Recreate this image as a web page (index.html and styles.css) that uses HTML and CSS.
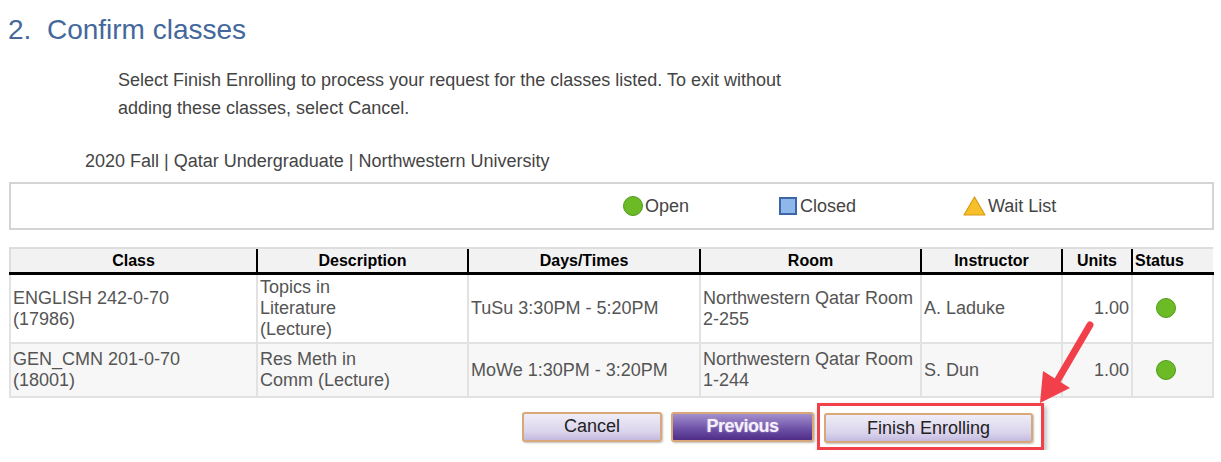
FILE: index.html
```html
<!DOCTYPE html>
<html lang="en">
<head>
    <meta charset="UTF-8">
    <title>Confirm classes</title>
    <link rel="stylesheet" href="styles.css">
</head>
<body>

<h1 class="step-title">2.&nbsp; Confirm classes</h1>

<p class="intro">Select Finish Enrolling to process your request for the classes listed. To exit without adding these classes, select Cancel.</p>

<div class="term">2020 Fall | Qatar Undergraduate | Northwestern University</div>

<!-- Legend -->
<div class="legend">
    <span class="legend-item legend-open"><span class="dot"></span>Open</span>
    <span class="legend-item legend-closed"><span class="square"></span>Closed</span>
    <span class="legend-item legend-wait">
        <svg class="tri" width="23" height="20" viewBox="0 0 23 20"><path d="M11.5 1 L22 19 L1 19 Z" fill="#f7c02a" stroke="#d99a12" stroke-width="1.2" stroke-linejoin="round"/></svg>Wait List
    </span>
</div>

<!-- Class list -->
<table class="classes">
    <thead>
        <tr>
            <th class="c-class">Class</th>
            <th class="c-desc">Description</th>
            <th class="c-days">Days/Times</th>
            <th class="c-room">Room</th>
            <th class="c-instr">Instructor</th>
            <th class="c-units">Units</th>
            <th class="c-status">Status</th>
        </tr>
    </thead>
    <tbody>
        <tr>
            <td>ENGLISH 242-0-70<br>(17986)</td>
            <td>Topics in<br>Literature<br>(Lecture)</td>
            <td>TuSu 3:30PM - 5:20PM</td>
            <td>Northwestern Qatar Room<br>2-255</td>
            <td>A. Laduke</td>
            <td class="num">1.00</td>
            <td class="status"><span class="dot"></span></td>
        </tr>
        <tr class="alt">
            <td>GEN_CMN 201-0-70<br>(18001)</td>
            <td>Res Meth in<br>Comm (Lecture)</td>
            <td>MoWe 1:30PM - 3:20PM</td>
            <td>Northwestern Qatar Room<br>1-244</td>
            <td>S. Dun</td>
            <td class="num">1.00</td>
            <td class="status"><span class="dot"></span></td>
        </tr>
    </tbody>
</table>

<div class="actions">
    <button class="btn">Cancel</button>
    <button class="btn btn-purple">Previous</button>
    <span class="highlight"><button class="btn btn-wide">Finish Enrolling</button></span>
</div>

<!-- annotation arrow -->
<svg class="arrow" width="80" height="100" viewBox="0 0 80 100">
    <line x1="58" y1="10" x2="24" y2="68" stroke="#f2404a" stroke-width="7" stroke-linecap="round"/>
    <path d="M8 88 L11 56 L38 73 Z" fill="#f2404a"/>
</svg>

</body>
</html>
```

FILE: styles.css
```css
body {
    font-family: 'Liberation Sans', Arial, sans-serif;
    color: #444;
    margin: 0;
    padding: 0;
    background: #fff;
    position: relative;
}

.step-title {
    font-size: 28px;
    font-weight: normal;
    color: #44689c;
    margin: 0;
    padding: 14px 0 0 8px;
    line-height: 32px;
}

.intro {
    font-size: 18px;
    line-height: 28px;
    margin: 20px 0 0 118px;
    width: 690px;
}

.term {
    font-size: 18px;
    margin: 29px 0 0 85px;
}

.legend {
    margin: 10px 7px 0 9px;
    height: 44px;
    border: 2px solid #d4d4d4;
    display: flex;
    align-items: center;
    font-size: 18px;
}

.legend-item {
    display: flex;
    align-items: center;
}

.legend-open {
    margin-left: 612px;
    width: 156px;
}

.legend-closed {
    width: 184px;
}

.legend-item .dot {
    margin-right: 2px;
}

.dot {
    display: inline-block;
    width: 18px;
    height: 18px;
    border-radius: 50%;
    background: #6cbb26;
    border: 1.5px solid #4e9b1a;
}

.square {
    display: inline-block;
    width: 14px;
    height: 14px;
    background: #8fb8ea;
    border: 2px solid #3d66a8;
    margin-right: 3px;
}

.tri {
    margin-right: 2px;
}

table.classes {
    margin: 17px 7px 0 9px;
    width: 1205px;
    border-collapse: collapse;
    font-size: 18px;
}

.classes th {
    background: #f2f2f2;
    color: #000;
    font-size: 16px;
    font-weight: bold;
    height: 23px;
    padding: 0;
    border-left: 2px solid #000;
    border-bottom: 3px solid #000;
    border-top: 2px solid #ddd;
}

.classes th:first-child {
    border-left: 2px solid #ddd;
}

.classes th.c-status {
    text-align: left;
    padding-left: 2px;
}

.c-class { width: 245px; }
.c-desc { width: 209px; }
.c-days { width: 230px; }
.c-room { width: 219px; }
.c-instr { width: 139px; }
.c-units { width: 68px; }

.classes td {
    border: 2px solid #e2e2e2;
    padding: 2px 2px;
    line-height: 21px;
    color: #555;
    vertical-align: middle;
}

.classes tr.alt td {
    height: 44px;
    background: #f7f7f7;
}

.classes td.num {
    text-align: right;
}

.classes td.status {
    text-align: center;
    padding: 6px 16px 2px 2px;
}

.actions {
    display: flex;
    align-items: center;
    margin: 5px 0 0 522px;
}

.btn {
    font-family: 'Liberation Sans', Arial, sans-serif;
    font-size: 18px;
    color: #222;
    height: 30px;
    padding: 0;
    width: 140px;
    border: 2px solid #d8a878;
    border-radius: 3px;
    background: linear-gradient(#efedf7, #d9d3ec 70%, #c3b9df);
    box-shadow: 1px 1px 2px rgba(0, 0, 0, 0.25);
}

.btn-purple {
    margin-left: 9px;
    width: 143px;
    color: #f4f0fa;
    font-weight: bold;
    letter-spacing: -0.5px;
    text-shadow: 0 0 2px #b8a8d8;
    background: linear-gradient(#a38fcd, #6b4ea5 60%, #4f2d86);
}

.btn-wide {
    width: 209px;
}

.highlight {
    margin-left: 3px;
    padding: 7px 8px 4px 4px;
    border: 3px solid #f2404a;
    box-shadow: 2px 3px 5px rgba(0, 0, 0, 0.3);
    display: inline-flex;
}

.arrow {
    position: absolute;
    left: 1032px;
    top: 315px;
}
```
